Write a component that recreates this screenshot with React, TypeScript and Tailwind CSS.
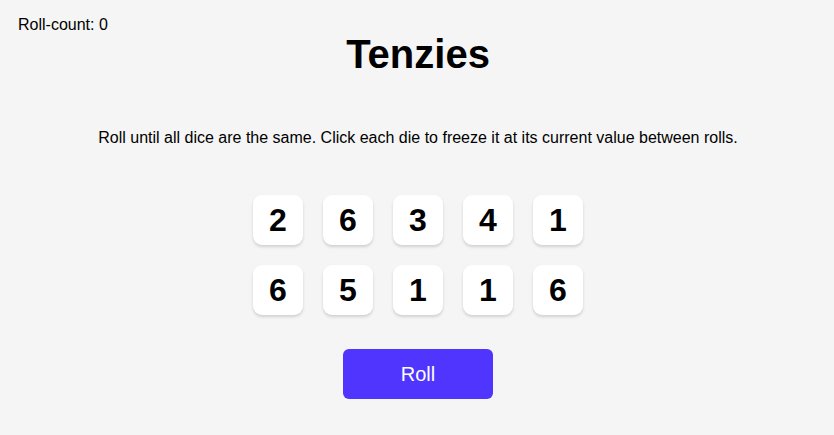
import React from "react";

const dice = [2, 6, 3, 4, 1, 6, 5, 1, 1, 6];

export default function App() {
  return (
    <div className="w-[834px] h-[435px] bg-[#f5f5f5] pl-[2px] text-black" style={{ fontFamily: '"Liberation Sans", Arial, sans-serif' }}>
      <div className="grid grid-cols-[1fr_auto_1fr] items-start">
        <p className="pl-[16px] pt-[13px] text-[16px] leading-6">Roll-count: 0</p>
        <h1 className="pt-[30px] text-[40px] leading-[48px] font-bold">Tenzies</h1>
        <div />
      </div>
      <p className="mt-[48px] text-center text-[16px] leading-6">
        Roll until all dice are the same. Click each die to freeze it at its current value between rolls.
      </p>
      <div className="mx-auto mt-[45px] grid w-max grid-cols-[repeat(5,50px)] gap-x-5 gap-y-5">
        {dice.map((d, i) => (
          <button
            key={i}
            className="flex h-[50px] w-[50px] items-center justify-center rounded-[9px] bg-white text-[32px] font-bold shadow-[0_2px_3px_rgba(0,0,0,0.15)]"
          >
            {d}
          </button>
        ))}
      </div>
      <div className="mt-[34px] flex justify-center">
        <button className="h-[50px] w-[150px] rounded-[6px] bg-[#5035ff] text-[20px] text-white">Roll</button>
      </div>
    </div>
  );
}
